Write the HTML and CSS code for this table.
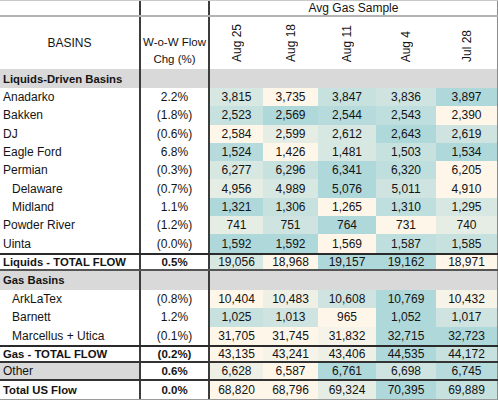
FILE: index.html
```html
<!DOCTYPE html>
<html>
<head>
<meta charset="utf-8">
<link rel="stylesheet" href="styles.css">
</head>
<body>
<div class="table">
  <div class="row top">
    <div class="c c1"></div>
    <div class="c c2"></div>
    <div class="c span">Avg Gas Sample</div>
  </div>
  <div class="row head">
    <div class="c c1 basins">BASINS</div>
    <div class="c c2 wow"><span>W-o-W Flow</span><span>Chg (%)</span></div>
    <div class="c date"><span>Aug 25</span></div>
    <div class="c date"><span>Aug 18</span></div>
    <div class="c date"><span>Aug 11</span></div>
    <div class="c date"><span>Aug 4</span></div>
    <div class="c date last"><span>Jul 28</span></div>
  </div>
  <div class="row section sec1">
    <div class="c c1 name b">Liquids-Driven Basins</div>
    <div class="c c2"></div>
    <div class="c"></div><div class="c"></div><div class="c"></div><div class="c"></div><div class="c last"></div>
  </div>
  <div class="row">
    <div class="c c1 name">Anadarko</div><div class="c c2 pct">2.2%</div>
    <div class="c v h5">3,815</div><div class="c v h0">3,735</div><div class="c v h7">3,847</div><div class="c v h6">3,836</div><div class="c v last h10">3,897</div>
  </div>
  <div class="row">
    <div class="c c1 name">Bakken</div><div class="c c2 pct">(1.8%)</div>
    <div class="c v h7">2,523</div><div class="c v h10">2,569</div><div class="c v h9">2,544</div><div class="c v h8">2,543</div><div class="c v last h0">2,390</div>
  </div>
  <div class="row">
    <div class="c c1 name">DJ</div><div class="c c2 pct">(0.6%)</div>
    <div class="c v h0">2,584</div><div class="c v h3">2,599</div><div class="c v h5">2,612</div><div class="c v h10">2,643</div><div class="c v last h6">2,619</div>
  </div>
  <div class="row">
    <div class="c c1 name">Eagle Ford</div><div class="c c2 pct">6.8%</div>
    <div class="c v h9">1,524</div><div class="c v h0">1,426</div><div class="c v h5">1,481</div><div class="c v h7">1,503</div><div class="c v last h10">1,534</div>
  </div>
  <div class="row">
    <div class="c c1 name">Permian</div><div class="c c2 pct">(0.3%)</div>
    <div class="c v h5">6,277</div><div class="c v h7">6,296</div><div class="c v h10">6,341</div><div class="c v h8">6,320</div><div class="c v last h0">6,205</div>
  </div>
  <div class="row">
    <div class="c c1 name sub">Delaware</div><div class="c c2 pct">(0.7%)</div>
    <div class="c v h3">4,956</div><div class="c v h5">4,989</div><div class="c v h10">5,076</div><div class="c v h6">5,011</div><div class="c v last h0">4,910</div>
  </div>
  <div class="row">
    <div class="c c1 name sub">Midland</div><div class="c c2 pct">1.1%</div>
    <div class="c v h10">1,321</div><div class="c v h7">1,306</div><div class="c v h0">1,265</div><div class="c v h8">1,310</div><div class="c v last h5">1,295</div>
  </div>
  <div class="row">
    <div class="c c1 name">Powder River</div><div class="c c2 pct">(1.2%)</div>
    <div class="c v h3">741</div><div class="c v h6">751</div><div class="c v h10">764</div><div class="c v h0">731</div><div class="c v last h3">740</div>
  </div>
  <div class="row">
    <div class="c c1 name">Uinta</div><div class="c c2 pct">(0.0%)</div>
    <div class="c v h10">1,592</div><div class="c v h10">1,592</div><div class="c v h0">1,569</div><div class="c v h8">1,587</div><div class="c v last h7">1,585</div>
  </div>
  <div class="row total ltotal">
    <div class="c c1 name b">Liquids - TOTAL FLOW</div><div class="c c2 pct b">0.5%</div>
    <div class="c v h5">19,056</div><div class="c v h0">18,968</div><div class="c v h10">19,157</div><div class="c v h10">19,162</div><div class="c v last h0">18,971</div>
  </div>
  <div class="row section">
    <div class="c c1 name b">Gas Basins</div>
    <div class="c c2"></div>
    <div class="c"></div><div class="c"></div><div class="c"></div><div class="c"></div><div class="c last"></div>
  </div>
  <div class="row">
    <div class="c c1 name sub">ArkLaTex</div><div class="c c2 pct">(0.8%)</div>
    <div class="c v h0">10,404</div><div class="c v h2">10,483</div><div class="c v h6">10,608</div><div class="c v h10">10,769</div><div class="c v last h1">10,432</div>
  </div>
  <div class="row">
    <div class="c c1 name sub">Barnett</div><div class="c c2 pct">1.2%</div>
    <div class="c v h7">1,025</div><div class="c v h6">1,013</div><div class="c v h0">965</div><div class="c v h10">1,052</div><div class="c v last h6">1,017</div>
  </div>
  <div class="row">
    <div class="c c1 name sub">Marcellus + Utica</div><div class="c c2 pct">(0.1%)</div>
    <div class="c v h0">31,705</div><div class="c v h0">31,745</div><div class="c v h1">31,832</div><div class="c v h10">32,715</div><div class="c v last h10">32,723</div>
  </div>
  <div class="row total gtotal">
    <div class="c c1 name b">Gas - TOTAL FLOW</div><div class="c c2 pct b">(0.2%)</div>
    <div class="c v h0">43,135</div><div class="c v h1">43,241</div><div class="c v h2">43,406</div><div class="c v h10">44,535</div><div class="c v last h7">44,172</div>
  </div>
  <div class="row other">
    <div class="c c1 name grey">Other</div><div class="c c2 pct b">0.6%</div>
    <div class="c v h2">6,628</div><div class="c v h0">6,587</div><div class="c v h10">6,761</div><div class="c v h6">6,698</div><div class="c v last h9">6,745</div>
  </div>
  <div class="row us">
    <div class="c c1 name b">Total US Flow</div><div class="c c2 pct b">0.0%</div>
    <div class="c v h0">68,820</div><div class="c v h0">68,796</div><div class="c v h3">69,324</div><div class="c v h10">70,395</div><div class="c v last h7">69,889</div>
  </div>
</div>
</body>
</html>
```

FILE: styles.css
```css
* { box-sizing: border-box; }

body {
  margin: 0;
  background: #ffffff;
  font-family: "Liberation Sans", Arial, sans-serif;
  font-size: 12px;
  color: #141414;
}

.table {
  width: 498px;
  display: flex;
  flex-direction: column;
}

.row {
  display: grid;
  grid-template-columns: 141px 69px 53px 55px 58px 60px 62px;
  height: 18.3px;
}

.c {
  display: flex;
  align-items: center;
  justify-content: center;
  white-space: nowrap;
  overflow: hidden;
}

.c1, .c2 {
  border-right: 2px solid #3c3c3c;
}

.last {
  border-right: 1px solid #8a8a8a;
}

.top {
  height: 17px;
  border-top: 1px solid #c9c9c9;
  border-bottom: 2px solid #b3b3b3;
}

.top .span {
  grid-column: 3 / span 5;
  border-right: 1px solid #8a8a8a;
  font-size: 12px;
}

.head {
  height: 52px;
}

.wow {
  flex-direction: column;
  justify-content: flex-end;
  line-height: 17px;
  padding-bottom: 1px;
  font-size: 11.5px;
}

.date {
  align-items: flex-end;
  padding-bottom: 7px;
}

.date span {
  writing-mode: vertical-rl;
  transform: rotate(180deg);
}

.section {
  height: 19px;
  background: #d9d9d9;
}

.name {
  justify-content: flex-start;
  padding-left: 3px;
}

.name.sub {
  padding-left: 12px;
}

.b {
  font-weight: bold;
  font-size: 11.3px;
}

.pct.b {
  font-size: 11.5px;
}

.grey {
  background: #d9d9d9;
}

.total {
  border-top: 2px solid #2a2a2a;
}

.ltotal {
  border-bottom: 2px solid #555555;
}

.gtotal {
  border-bottom: 2px solid #333333;
}

.other {
  border-bottom: 2px solid #333333;
}

.us {
  border-bottom: 1px solid #9a9a9a;
}

.h0 { background: #fef6e9; }
.h1 { background: #f6f3e8; }
.h2 { background: #eef0e6; }
.h3 { background: #e6ede5; }
.h4 { background: #deeae3; }
.h5 { background: #d7e7e2; }
.h6 { background: #cfe4e1; }
.h7 { background: #c7e1df; }
.h8 { background: #bfdede; }
.h9 { background: #b7dbdc; }
.h10 { background: #afd8db; }
```
